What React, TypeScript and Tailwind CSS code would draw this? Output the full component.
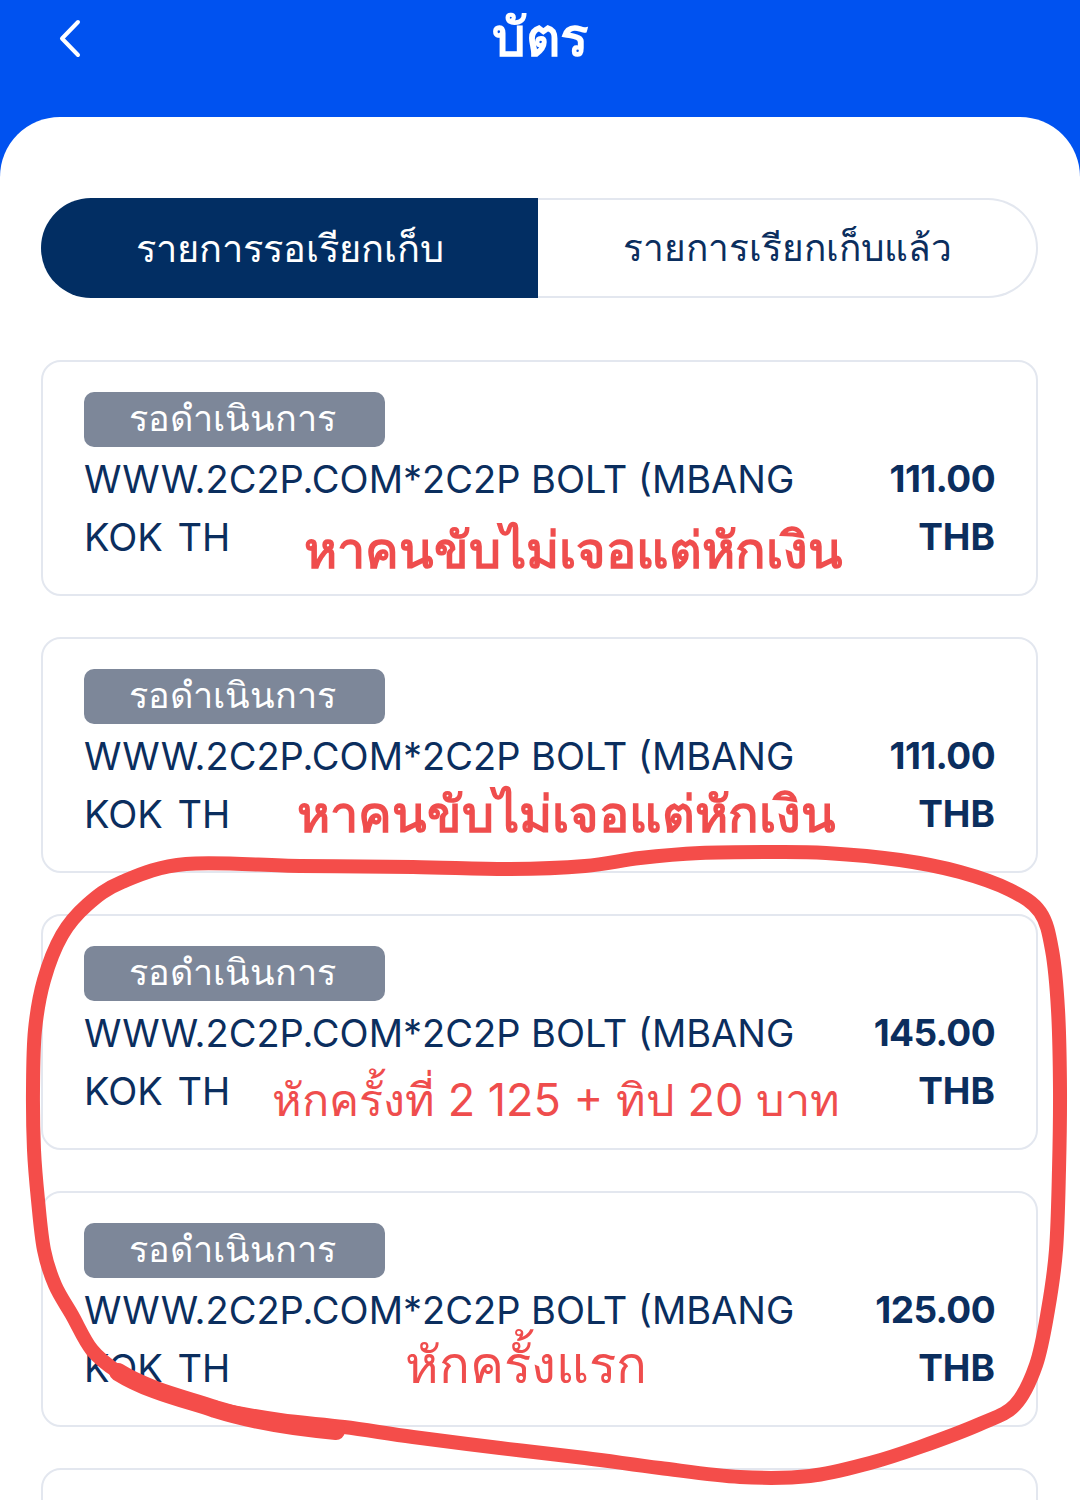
const font = { fontFamily: "Inter" };

const cards = [
  { amount: "111.00", note: "หาคนขับไม่เจอแต่หักเงิน", noteClass: "left-[261px] top-[163px] text-[50.5px] font-semibold" },
  { amount: "111.00", note: "หาคนขับไม่เจอแต่หักเงิน", noteClass: "left-[254px] top-[150px] text-[50.5px] font-semibold" },
  { amount: "145.00", note: "หักครั้งที่ 2 125 + ทิป 20 บาท", noteClass: "left-[229px] top-[161px] text-[45px]" },
  { amount: "125.00", note: "หักครั้งแรก", noteClass: "left-[362px] top-[146px] text-[51px]" },
];

// hand traced marker line, x/y on the 1080x1500 page
const scribble = [
  [150, 1388], [118, 1372], [92, 1350], [72, 1315], [55, 1285], [44, 1250], [38, 1200], [34, 1150], [33, 1090],
  [35, 1030], [44, 980], [62, 935], [87, 905], [122, 882], [186, 864], [300, 866], [413, 867], [510, 869],
  [585, 866], [640, 858], [700, 853], [770, 852], [826, 853], [900, 860], [960, 872], [1010, 890], [1040, 912],
  [1052, 950], [1058, 1010], [1060, 1090], [1059, 1170], [1056, 1250], [1048, 1310], [1036, 1365], [1015, 1405],
  [980, 1424], [920, 1447], [870, 1463], [810, 1476], [740, 1477], [660, 1468], [585, 1458], [500, 1448],
  [413, 1437], [344, 1427], [280, 1420], [213, 1408], [175, 1397], [150, 1388],
];

function smoothPath(points: number[][]) {
  let d = `M${points[0][0]} ${points[0][1]}`;
  for (let i = 0; i < points.length - 1; i++) {
    const p0 = points[i - 1] ?? points[i];
    const p1 = points[i];
    const p2 = points[i + 1];
    const p3 = points[i + 2] ?? p2;
    const c1x = p1[0] + (p2[0] - p0[0]) / 6;
    const c1y = p1[1] + (p2[1] - p0[1]) / 6;
    const c2x = p2[0] - (p3[0] - p1[0]) / 6;
    const c2y = p2[1] - (p3[1] - p1[1]) / 6;
    d += `C${c1x} ${c1y} ${c2x} ${c2y} ${p2[0]} ${p2[1]}`;
  }
  return d;
}

function Card({ amount, note, noteClass }: { amount: string; note: string; noteClass: string }) {
  return (
    <div className="relative h-[236px] shrink-0 rounded-[20px] border-2 border-[#e3e7ef] bg-white pl-[41px] pr-[41px] pt-[30px]">
      <div className="flex h-[55px] w-[301px] items-center justify-center rounded-[10px] bg-[#7d8799] pb-[4px] pr-[4px] text-[36px] font-light text-white">
        รอดำเนินการ
      </div>
      <div className="mt-[3px] flex justify-between leading-[58px] text-[#0b2e5e]">
        <div className="text-[38px]">
          <p>WWW.2C2P.COM*2C2P BOLT (MBANG</p>
          <p className="[word-spacing:4px]">KOK TH</p>
        </div>
        <div className="text-right text-[37px] font-bold">
          <p className="tracking-[-0.6px]">{amount}</p>
          <p>THB</p>
        </div>
      </div>
      <span className={`absolute whitespace-nowrap leading-none text-[#ef4d4d] ${noteClass}`}>{note}</span>
    </div>
  );
}

export default function App() {
  return (
    <div className="relative h-[1500px] w-[1080px] overflow-hidden bg-[#0052f0]" style={font}>
      <header className="relative flex h-[117px] items-start justify-center pt-[6px]">
        <svg className="absolute left-[56px] top-[18px]" width="28" height="40" viewBox="0 0 28 40" fill="none">
          <path d="M22 4 6 20.500l16 16.500" stroke="white" strokeWidth="4" strokeLinecap="round" strokeLinejoin="round" />
        </svg>
        <h1 className="text-[53px] font-bold leading-[62px] text-white">บัตร</h1>
      </header>

      <main className="flex h-[1383px] flex-col rounded-t-[60px] bg-white pl-[41px] pr-[42px] pt-[81px]">
        <div className="flex h-[100px] shrink-0">
          <button className="flex w-[497px] items-center justify-center rounded-l-[50px] bg-[#022e63] text-[38px] text-white">
            รายการรอเรียกเก็บ
          </button>
          <button className="flex flex-1 items-center justify-center rounded-r-[50px] border-2 border-l-0 border-[#e3e7ef] text-[37px] text-[#0b2e5e]">
            รายการเรียกเก็บแล้ว
          </button>
        </div>

        <div className="mt-[62px] flex flex-col gap-[41px]">
          {cards.map((card, i) => (
            <Card key={i} {...card} />
          ))}
          <div className="h-[236px] shrink-0 rounded-[20px] border-2 border-[#e3e7ef]" />
        </div>
      </main>

      {/* red marker scribble on top of the screenshot */}
      <svg className="absolute inset-0" width="1080" height="1500" viewBox="0 0 1080 1500" fill="none">
        <path d={smoothPath(scribble)} stroke="#f44d4a" strokeWidth="14" strokeLinecap="round" strokeLinejoin="round" />
        <path
          d="M336 1431C290 1427 250 1420 215 1409C190 1400 150 1392 118 1372"
          stroke="#f44d4a"
          strokeWidth="18"
          strokeLinecap="round"
          strokeLinejoin="round"
        />
      </svg>
    </div>
  );
}
